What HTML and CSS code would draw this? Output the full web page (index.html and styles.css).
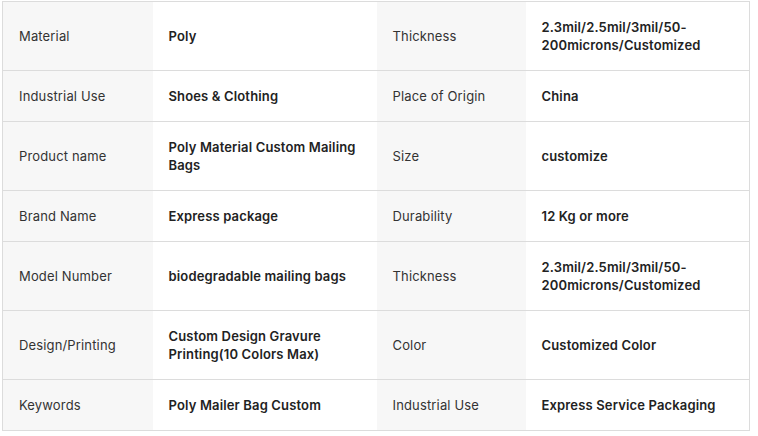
FILE: index.html
```html
<!DOCTYPE html>
<html>
<head>
<meta charset="utf-8">
<link rel="stylesheet" href="styles.css">
</head>
<body>
<table class="specs">
  <colgroup>
    <col class="c-label"><col class="c-value"><col class="c-label2"><col class="c-value">
  </colgroup>
  <tr>
    <td class="label">Material</td><td class="value">Poly</td>
    <td class="label">Thickness</td><td class="value">2.3mil/2.5mil/3mil/50-200microns/Customized</td>
  </tr>
  <tr>
    <td class="label">Industrial Use</td><td class="value">Shoes &amp; Clothing</td>
    <td class="label">Place of Origin</td><td class="value">China</td>
  </tr>
  <tr>
    <td class="label">Product name</td><td class="value">Poly Material Custom Mailing Bags</td>
    <td class="label">Size</td><td class="value">customize</td>
  </tr>
  <tr>
    <td class="label">Brand Name</td><td class="value">Express package</td>
    <td class="label">Durability</td><td class="value">12 Kg or more</td>
  </tr>
  <tr>
    <td class="label">Model Number</td><td class="value">biodegradable mailing bags</td>
    <td class="label">Thickness</td><td class="value">2.3mil/2.5mil/3mil/50-200microns/Customized</td>
  </tr>
  <tr>
    <td class="label">Design/Printing</td><td class="value">Custom Design Gravure Printing(10 Colors Max)</td>
    <td class="label">Color</td><td class="value">Customized Color</td>
  </tr>
  <tr>
    <td class="label">Keywords</td><td class="value">Poly Mailer Bag Custom</td>
    <td class="label">Industrial Use</td><td class="value">Express Service Packaging</td>
  </tr>
</table>
</body>
</html>
```
FILE: styles.css
```css
html, body {
  margin: 0;
  padding: 0;
  background: #fff;
}
body {
  padding: 1px 0 0 2px;
  font-family: Inter, "Noto Sans", sans-serif;
  font-size: 13px;
  line-height: 18px;
  letter-spacing: 0.15px;
}
.specs {
  border-collapse: collapse;
  table-layout: fixed;
  width: 748px;
  border: 1px solid #dcdcdc;
}
.c-label { width: 150px; }
.c-label2 { width: 149px; }
.c-value { width: 224px; }
.specs td {
  padding: 16px;
  border-top: 1px solid #dcdcdc;
  vertical-align: middle;
  word-wrap: break-word;
}
.label {
  background: #f7f7f7;
  color: #333;
  font-weight: 400;
}
.value {
  background: #fff;
  color: #222;
  font-weight: 600;
}
```
